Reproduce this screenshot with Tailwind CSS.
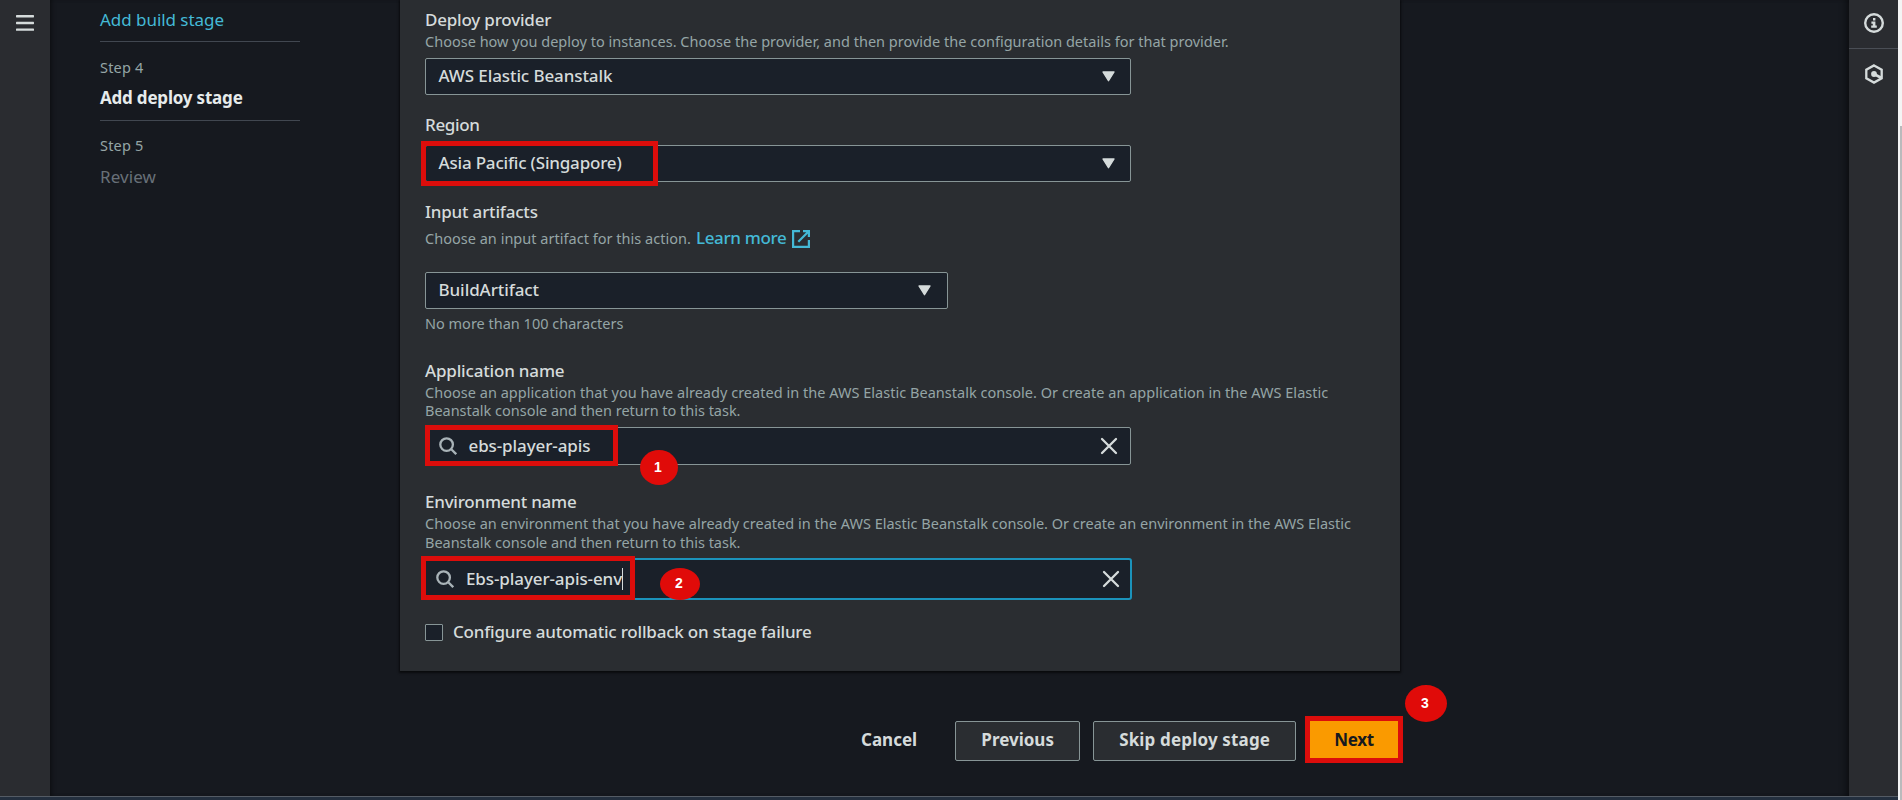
<!DOCTYPE html>
<html lang="en">
<head>
<meta charset="utf-8">
<title>Add deploy stage</title>
<script src="https://cdn.jsdelivr.net/npm/@tailwindcss/browser@4"></script>
</head>
<body class="h-[800px] w-[1902px] overflow-hidden bg-[#16191f] font-['Noto_Sans',sans-serif] text-[17px] leading-[22px] text-[#d5dbdb]">
<div class="flex h-[800px]">
  <div class="flex h-[800px] w-[1898px] flex-col">
    <div class="flex h-[796px]">

      <!-- Collapsed navigation -->
      <aside class="w-[50px] shrink-0 bg-[#2a2c30] pt-[15px] pl-4">
        <svg width="18" height="16" viewBox="0 0 18 16" fill="#d5dbdb"><rect y="0" width="18" height="2.4" rx=".6"/><rect y="6.8" width="18" height="2.4" rx=".6"/><rect y="13.4" width="18" height="2.4" rx=".6"/></svg>
      </aside>

      <main class="flex w-[1799px] shrink-0 shadow-[inset_4px_0_5px_-3px_#0008,inset_-8px_0_8px_-7px_#000a]">
        <!-- Wizard steps -->
        <nav class="ml-[50px] w-[200px] shrink-0 whitespace-nowrap">
          <div class="h-[42px] border-b border-[#414750] pt-[9px] tracking-[-0.044px] text-[#44b9d6]">Add build stage</div>
          <div class="h-[79px] border-b border-[#414750] pt-4">
            <div class="text-[14.5px] leading-[18px] tracking-[0.19px] text-[#95a5a6]">Step 4</div>
            <div class="mt-[11px] font-bold tracking-[-0.2px] text-[#e6ebeb]">Add deploy stage</div>
          </div>
          <div class="pt-[15px]">
            <div class="text-[14.5px] leading-[18px] tracking-[0.19px] text-[#95a5a6]">Step 5</div>
            <div class="mt-3 tracking-[0.09px] text-[#687078]">Review</div>
          </div>
        </nav>

        <div class="ml-[100px] w-[1000px] shrink-0">
          <section class="h-[671px] bg-[#2a2d31] px-[25px] pt-[9px] font-medium whitespace-nowrap shadow-[0_1px_2px_1px_#0009]">
            <div class="tracking-[-0.2px]">Deploy provider</div>
            <p class="mt-px text-[14.5px] leading-[18px] font-normal tracking-[0.01px] text-[#95a5a6]">Choose how you deploy to instances. Choose the provider, and then provide the configuration details for that provider.</p>
            <div class="mt-2 flex h-[37px] w-[706px] items-center justify-between rounded-[2px] border border-[#879596] bg-[#1a2029] pr-[15px] pb-0.5 pl-[12.5px]">
              <span class="tracking-[-0.1px]">AWS Elastic Beanstalk</span>
              <svg class="mt-px" width="13" height="11" viewBox="0 0 13 11"><path d="M1 1h11L6.5 9.7z" fill="#d5dbdb" stroke="#d5dbdb" stroke-width="1.4" stroke-linejoin="round"/></svg>
            </div>

            <div class="mt-[19px] tracking-[-0.35px]">Region</div>
            <div class="relative mt-[9px] flex h-[37px] w-[706px] items-center justify-between rounded-[2px] border border-[#879596] bg-[#1a2029] pr-[15px] pb-0.5 pl-[12.5px]">
              <span class="tracking-[-0.19px]">Asia Pacific (Singapore)</span>
              <svg class="mt-px" width="13" height="11" viewBox="0 0 13 11"><path d="M1 1h11L6.5 9.7z" fill="#d5dbdb" stroke="#d5dbdb" stroke-width="1.4" stroke-linejoin="round"/></svg>
              <div class="absolute -top-[5px] -left-[5px] h-[45px] w-[237px] border-[5px] border-[#dc0d0b]"></div>
            </div>

            <div class="mt-[19px] tracking-[-0.2px]">Input artifacts</div>
            <div class="mt-[3px] flex h-[22px] items-baseline">
              <span class="text-[14.5px] leading-[18px] font-normal tracking-[0.02px] text-[#95a5a6]">Choose an input artifact for this action.</span>
              <a class="ml-[5px] tracking-[-0.33px] text-[#44b9d6]">Learn more</a>
              <svg class="ml-[5px] translate-y-1" width="18" height="18" viewBox="0 0 18 18" fill="none" stroke="#44b9d6" stroke-width="2.2"><path d="M8 1.1H1.1V16.9H16.9V10M11 1.1h5.9V7M16.5 1.5L6.3 11.7"/></svg>
            </div>
            <div class="mt-6 flex h-[37px] w-[523px] items-center justify-between rounded-[2px] border border-[#879596] bg-[#1a2029] pr-[16px] pb-0.5 pl-[12.5px]">
              <span class="tracking-[-0.08px]">BuildArtifact</span>
              <svg class="mt-px" width="13" height="11" viewBox="0 0 13 11"><path d="M1 1h11L6.5 9.7z" fill="#d5dbdb" stroke="#d5dbdb" stroke-width="1.4" stroke-linejoin="round"/></svg>
            </div>
            <p class="mt-[5px] text-[14.5px] leading-[18px] font-normal text-[#95a5a6]">No more than 100 characters</p>

            <div class="mt-[28px] tracking-[-0.18px]">Application name</div>
            <p class="mt-px text-[14.5px] leading-[18px] font-normal tracking-[0.025px] text-[#95a5a6]">Choose an application that you have already created in the AWS Elastic Beanstalk console. Or create an application in the AWS Elastic<br><span class="tracking-[-0.02px]">Beanstalk console and then return to this task.</span></p>
            <div class="relative mt-2 flex h-[38px] w-[706px] items-center rounded-[2px] border border-[#879596] bg-[#1a2029] pr-[12px] pb-px pl-[13px]">
              <svg width="18" height="18" viewBox="0 0 18 18" fill="none" stroke="#a9b3b8" stroke-width="2.3"><circle cx="7.6" cy="7.6" r="6.3"/><path d="M12 12l5.2 5.2"/></svg>
              <span class="ml-[11.5px] flex-1 tracking-[-0.1px]">ebs-player-apis</span>
              <svg width="18" height="18" viewBox="0 0 18 18" stroke="#d5dbdb" stroke-width="2.3" stroke-linecap="round"><path d="M2 2l14 14M16 2L2 16"/></svg>
              <div class="absolute -top-[3px] -left-px h-[41px] w-[193px] border-[5px] border-[#dc0d0b]"></div>
              <div class="absolute top-[22px] left-[214px] flex h-[35px] w-[38px] items-center justify-center rounded-[50%] bg-[#e00b09] pr-[2px] pb-px font-['Liberation_Sans',sans-serif] text-[14px] font-bold text-white">1</div>
            </div>

            <div class="mt-[26px] tracking-[-0.24px]">Environment name</div>
            <p class="mt-px text-[14.5px] leading-[19px] font-normal tracking-[0.01px] text-[#95a5a6]">Choose an environment that you have already created in the AWS Elastic Beanstalk console. Or create an environment in the AWS Elastic<br><span class="tracking-[-0.02px]">Beanstalk console and then return to this task.</span></p>
            <div class="relative mt-1.5 -ml-px flex h-[42px] w-[708px] items-center rounded-[3px] border-2 border-[#1b93bb] bg-[#1a2029] pr-[10px] pb-px pl-[10px]">
              <svg width="18" height="18" viewBox="0 0 18 18" fill="none" stroke="#a9b3b8" stroke-width="2.3"><circle cx="7.6" cy="7.6" r="6.3"/><path d="M12 12l5.2 5.2"/></svg>
              <span class="ml-3 tracking-[-0.1px]">Ebs-player-apis-env</span>
              <span class="h-[22px] w-px bg-[#d5dbdb]"></span>
              <svg class="ml-auto" width="18" height="18" viewBox="0 0 18 18" stroke="#d5dbdb" stroke-width="2.3" stroke-linecap="round"><path d="M2 2l14 14M16 2L2 16"/></svg>
              <div class="absolute -top-1 -left-[5px] h-[44px] w-[214px] border-[5px] border-[#dc0d0b]"></div>
              <div class="absolute top-2 left-[234px] flex h-[32px] w-[40px] items-center justify-center rounded-[50%] bg-[#e00b09] pr-[2px] pb-[3px] font-['Liberation_Sans',sans-serif] text-[14px] font-bold text-white">2</div>
            </div>

            <div class="mt-[21px] flex h-[22px] items-center">
              <span class="mt-px h-[17px] w-[18px] rounded-[1px] border border-[#879596] bg-[#1a2029]"></span>
              <span class="ml-[10px] tracking-[-0.2px]">Configure automatic rollback on stage failure</span>
            </div>
          </section>

          <!-- Wizard actions -->
          <div class="relative ml-[461px] flex w-[542px] items-center pt-[45px] font-bold whitespace-nowrap">
            <span class="pt-px">Cancel</span>
            <div class="ml-[38px] flex h-[45px] items-center">
              <div class="mt-0.5 flex h-10 w-[125px] items-center justify-center rounded-[2px] border border-[#879596] bg-[#2a2d31] pb-0.5">Previous</div>
              <div class="mt-0.5 ml-[13px] flex h-10 w-[203px] items-center justify-center rounded-[2px] border border-[#879596] bg-[#2a2d31] pb-0.5 tracking-[0.16px]">Skip deploy stage</div>
            </div>
            <div class="ml-[9px] flex h-[47px] w-[98px] items-center justify-center border-[5px] border-[#dc0d0b] bg-[#fa9a00] tracking-[-0.3px] text-[#16191f]">Next</div>
            <div class="absolute top-[14px] left-[544px] flex h-[37px] w-[42px] items-center justify-center rounded-[50%] bg-[#e00b09] pr-[2px] pb-px font-['Liberation_Sans',sans-serif] text-[14px] text-white">3</div>
          </div>
        </div>
      </main>

      <!-- Tools rail -->
      <aside class="flex w-[49px] shrink-0 flex-col items-center bg-[#2a2c30]">
        <div class="flex h-[49px] w-full justify-center border-b border-[#4a4e55] pt-[13px] pl-px">
          <svg width="20" height="20" viewBox="0 0 20 20"><circle cx="10" cy="10" r="8.8" fill="none" stroke="#d5dbdb" stroke-width="2.4"/><path d="M9 5h2.4v2.4H9zM7.4 8.6h4v3.9h1.4v2.3H7.2v-2.3h1.6v-1.7H7.4z" fill="#d5dbdb"/></svg>
        </div>
        <svg class="mt-[15px] ml-px" width="20" height="20" viewBox="0 0 20 20"><path d="M10 1.4l7.7 4.3v8.6L10 18.6l-7.7-4.3V5.7z" fill="none" stroke="#d5dbdb" stroke-width="2.3"/><circle cx="10" cy="10" r="2.9" fill="#d5dbdb"/><path d="M10 10l7.5 4" stroke="#d5dbdb" stroke-width="2.6"/></svg>
      </aside>
    </div>
    <div class="h-1 border-t border-[#545b64] bg-[#232f3e]"></div>
  </div>

  <!-- Page scrollbar -->
  <div class="w-0.5 bg-[#f4f4f4]"></div>
  <div class="w-0.5 bg-[#f4f4f4] pt-[126px]"><div class="h-[674px] bg-[#b9babc]"></div></div>
</div>
</body>
</html>
